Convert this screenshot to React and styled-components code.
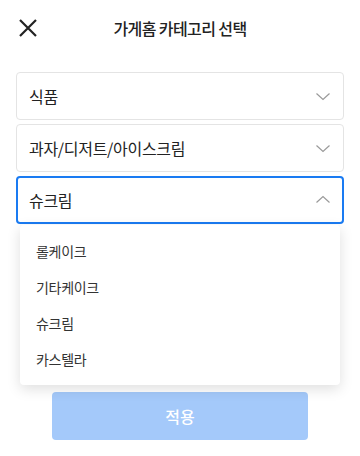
import React from "react";
import styled, { createGlobalStyle } from "styled-components";

const Global = createGlobalStyle`
  html, body { margin: 0; padding: 0; background: #fff; }
  body { font-family: "Noto Sans CJK KR", "Noto Sans", sans-serif; color: #222; }
  * { box-sizing: border-box; }
`;

const Page = styled.div`
  display: flex;
  flex-direction: column;
  min-height: 456px;
  width: 360px;
`;

const Header = styled.header`
  position: relative;
  display: flex;
  align-items: center;
  justify-content: center;
  height: 56px;
`;

const CloseButton = styled.button`
  position: absolute;
  left: 16px;
  top: 16px;
  width: 24px;
  height: 24px;
  padding: 0;
  border: 0;
  background: none;
  display: flex;
  align-items: center;
  justify-content: center;
`;

const Title = styled.h1`
  margin: 0;
  font-size: 16px;
  font-weight: 500;
  letter-spacing: -0.6px;
  color: #222;
`;

const Fields = styled.div`
  display: flex;
  flex-direction: column;
  gap: 4px;
  padding: 16px 16px 0;
`;

const SelectWrap = styled.div`
  position: relative;
`;

const SelectBox = styled.div`
  display: flex;
  align-items: center;
  justify-content: space-between;
  height: 48px;
  border: ${(p) => (p.$open ? "2px solid #1a7bf2" : "1px solid #e4e4e4")};
  padding: 0 ${(p) => (p.$open ? "11px" : "12px")};
  border-radius: 4px;
  font-size: 16px;
  color: #222;
  letter-spacing: -0.3px;
`;

const Menu = styled.ul`
  position: absolute;
  z-index: 2;
  left: 4px;
  right: 4px;
  top: 49px;
  margin: 0;
  padding: 8px 0;
  list-style: none;
  background: #fff;
  border-radius: 4px;
  box-shadow: 0 4px 14px rgba(0, 0, 0, 0.13);
`;

const MenuItem = styled.li`
  height: 36px;
  display: flex;
  align-items: center;
  padding-left: 16px;
  font-size: 14px;
  color: #333;
  letter-spacing: -0.3px;
`;

const Footer = styled.div`
  margin-top: auto;
  display: flex;
  justify-content: center;
  padding-bottom: 16px;
`;

const ApplyButton = styled.button`
  width: 256px;
  height: 48px;
  border: 0;
  border-radius: 4px;
  background: #a4c9fa;
  color: #fff;
  font-family: "Noto Sans CJK KR", sans-serif;
  font-size: 16px;
  font-weight: 500;
`;

const Chevron = ({ up }) => (
  <svg width="16" height="16" viewBox="0 0 16 16" fill="none">
    <path
      d={up ? "M1.5 10.5 L8 4.5 L14.5 10.5" : "M1.5 5.5 L8 11.5 L14.5 5.5"}
      stroke="#9a9a9a"
      strokeWidth="1.2"
    />
  </svg>
);

export default function App() {
  return (
    <Page>
      <Global />
      <Header>
        <CloseButton aria-label="닫기">
          <svg width="20" height="20" viewBox="0 0 20 20" fill="none">
            <path d="M2 2 L18 18 M18 2 L2 18" stroke="#222" strokeWidth="2.2" />
          </svg>
        </CloseButton>
        <Title>가게홈 카테고리 선택</Title>
      </Header>
      <Fields>
        <SelectBox>
          식품
          <Chevron />
        </SelectBox>
        <SelectBox>
          과자/디저트/아이스크림
          <Chevron />
        </SelectBox>
        <SelectWrap>
          <SelectBox $open>
            슈크림
            <Chevron up />
          </SelectBox>
          <Menu>
            {["롤케이크", "기타케이크", "슈크림", "카스텔라"].map((t) => (
              <MenuItem key={t}>{t}</MenuItem>
            ))}
          </Menu>
        </SelectWrap>
      </Fields>
      <Footer>
        <ApplyButton>적용</ApplyButton>
      </Footer>
    </Page>
  );
}
